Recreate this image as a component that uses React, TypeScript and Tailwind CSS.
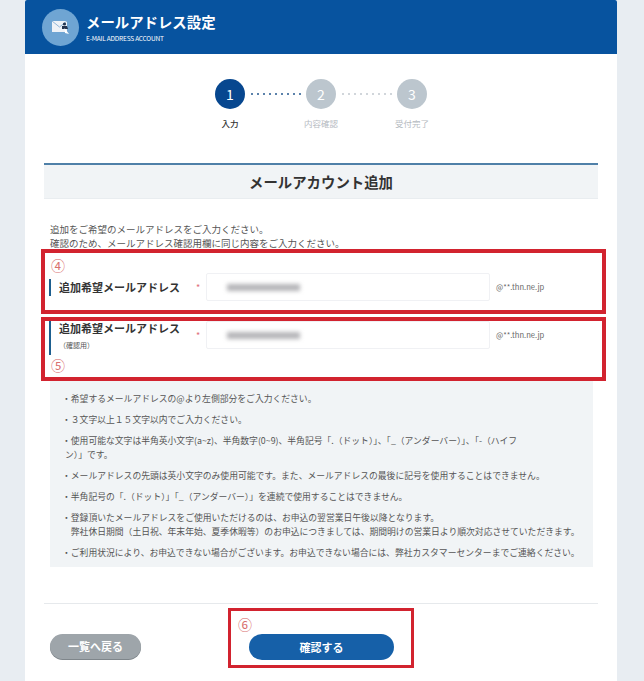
const font = "font-['Noto_Sans_CJK_JP','Noto_Sans',sans-serif]";

function Dots({ color }: { color: string }) {
  return (
    <div className="flex w-[61px] items-center justify-center gap-[4px]">
      {Array.from({ length: 9 }).map((_, i) => (
        <span key={i} className={`h-[2px] w-[2px] rounded-full ${color}`} />
      ))}
    </div>
  );
}

function MailIcon() {
  return (
    <svg width="18" height="15" viewBox="0 0 18 15">
      <rect x="0" y="1" width="15" height="11" fill="#eef2f7" />
      <path d="M0 1 L7.5 7 L15 1" fill="none" stroke="#8fb5d8" strokeWidth="1" />
      <circle cx="12.5" cy="4" r="1.6" fill="#23344f" />
      <path d="M10 6 h5 l1 3 h-6 z" fill="#23344f" />
      <path d="M12.5 8 l4.5 6 l-4 -1 z" fill="#fff" />
    </svg>
  );
}

function Field({ sub }: { sub?: boolean }) {
  return (
    <div className="flex h-[28px] items-start">
      <div className={`ml-[4px] flex w-[147px] border-l-2 border-[#1d5f8f] pl-[8px] ${sub ? "h-[34px] flex-col" : "mt-[6px] h-[17px] items-center"}`}>
        <span className={`text-[11px] leading-[14px] font-bold text-[#333] ${sub ? "" : "-mt-[2px]"}`}>追加希望メールアドレス</span>
        {sub && <span className="mt-[6px] text-[7px] leading-[9px] text-[#555]">（確認用）</span>}
      </div>
      <span className="mt-[10px] w-[10px] text-[9px] leading-[10px] text-[#e0707a]">*</span>
      <div className="flex h-[28px] w-[284px] items-center rounded-[2px] border border-[#f0f1f4] pl-[20px]">
        <span className="h-[7px] w-[73px] bg-[#b5b5b8] blur-[2px]" />
      </div>
      <span className="ml-[6px] self-center text-[7.6px] leading-[12px] text-[#666]">@**.thn.ne.jp</span>
    </div>
  );
}

const notes = [
  ["・希望するメールアドレスの@より左側部分をご入力ください。"],
  ["・３文字以上１５文字以内でご入力ください。"],
  ["・使用可能な文字は半角英小文字(a~z)、半角数字(0~9)、半角記号「.（ドット）」、「_（アンダーバー）」、「-（ハイフ", "ン）」です。"],
  ["・メールアドレスの先頭は英小文字のみ使用可能です。また、メールアドレスの最後に記号を使用することはできません。"],
  ["・半角記号の「.（ドット）」「_（アンダーバー）」を連続で使用することはできません。"],
  ["・登録頂いたメールアドレスをご使用いただけるのは、お申込の翌営業日午後以降となります。", "　弊社休日期間（土日祝、年末年始、夏季休暇等）のお申込につきましては、期間明けの営業日より順次対応させていただきます。"],
  ["・ご利用状況により、お申込できない場合がございます。お申込できない場合には、弊社カスタマーセンターまでご連絡ください。"],
];

export default function App() {
  return (
    <div className={`h-[681px] overflow-hidden bg-[#e8edf2] ${font}`}>
      <div className="ml-[25px] h-[681px] w-[592px] bg-white">
        <header className="flex h-[54px] items-center rounded-t-[2px] bg-[#07539f] pl-[17px]">
          <div className="flex h-[37px] w-[37px] items-center justify-center rounded-full bg-[#6fa5d3]">
            <MailIcon />
          </div>
          <div className="ml-[7px] text-white">
            <div className="text-[14.4px] leading-[20px] font-bold">メールアドレス設定</div>
            <div className="mt-[2px] text-[6.5px] leading-[9px] tracking-[-0.2px]">E-MAIL ADDRESS ACCOUNT</div>
          </div>
        </header>

        <div className="mt-[25px] flex items-center justify-center">
          <div className="flex h-[30px] w-[30px] items-center justify-center rounded-full bg-[#07478f] text-[14px] text-white">1</div>
          <Dots color="bg-[#24588f]" />
          <div className="flex h-[30px] w-[30px] items-center justify-center rounded-full bg-[#bcc6ce] text-[14px] text-white">2</div>
          <Dots color="bg-[#c2c9cf]" />
          <div className="flex h-[30px] w-[30px] items-center justify-center rounded-full bg-[#bcc6ce] text-[14px] text-white">3</div>
        </div>
        <div className="mt-[8px] flex justify-center text-center text-[8.5px] leading-[12px]">
          <span className="w-[91px] font-medium text-[#333]">入力</span>
          <span className="w-[91px] text-[#b5babf]">内容確認</span>
          <span className="w-[91px] text-[#b5babf]">受付完了</span>
        </div>

        <div className="mx-[19px] mt-[34px] flex h-[36px] items-center justify-center border-t-2 border-b border-t-[#4f80a8] border-b-[#e9edf0] bg-[#f1f4f6] text-[14.4px] font-bold text-[#333]">
          メールアカウント追加
        </div>

        <p className="mt-[23px] ml-[25px] text-[9.5px] leading-[14px] text-[#555]">
          追加をご希望のメールアドレスをご入力ください。
          <br />
          確認のため、メールアドレス確認用欄に同じ内容をご入力ください。
        </p>

        <div className="mt-[-1px] ml-[16px] h-[65px] w-[565px] border-4 border-[#d2232f]">
          <div className="ml-[6px] h-[20px] text-[14px] leading-[24px] text-[#d9706f]">④</div>
          <Field />
        </div>
        <div className="mt-[3px] ml-[16px] h-[64px] w-[565px] border-4 border-[#d2232f]">
          <Field sub />
          <div className="mt-[6px] ml-[6px] h-[20px] text-[14px] leading-[20px] text-[#d9706f]">⑤</div>
        </div>

        <ul className="ml-[25px] h-[186px] w-[543px] bg-[#f1f4f6] pt-[11px] pl-[12px] text-[8.8px] leading-[14px] text-[#555]">
          {notes.map((lines, i) => (
            <li key={i} className="mb-[7px] whitespace-nowrap">
              {lines.map((line, j) => (
                <div key={j} className={i === 2 && j === 1 ? "pl-[3px]" : ""}>
                  {line}
                </div>
              ))}
            </li>
          ))}
        </ul>

        <div className="mx-[19px] mt-[36px] h-[1px] bg-[#e6e9ec]" />

        <div className="relative mt-[30px] ml-[25px] flex items-start">
          <button className="h-[25px] w-[91px] rounded-full bg-[#9ea5aa] text-[11px] font-bold text-white shadow-[0_1px_0_#7f868b]">
            一覧へ戻る
          </button>
          <button className="ml-[108px] h-[26px] w-[145px] rounded-full bg-[#1660a8] text-[11px] font-bold text-white">
            確認する
          </button>
          <div className="absolute top-[-26px] left-[178px] h-[60px] w-[186px] border-[3px] border-[#d2232f] pl-[7px]">
            <span className="text-[14px] leading-[20px] text-[#d9706f]">⑥</span>
          </div>
        </div>
      </div>
    </div>
  );
}
